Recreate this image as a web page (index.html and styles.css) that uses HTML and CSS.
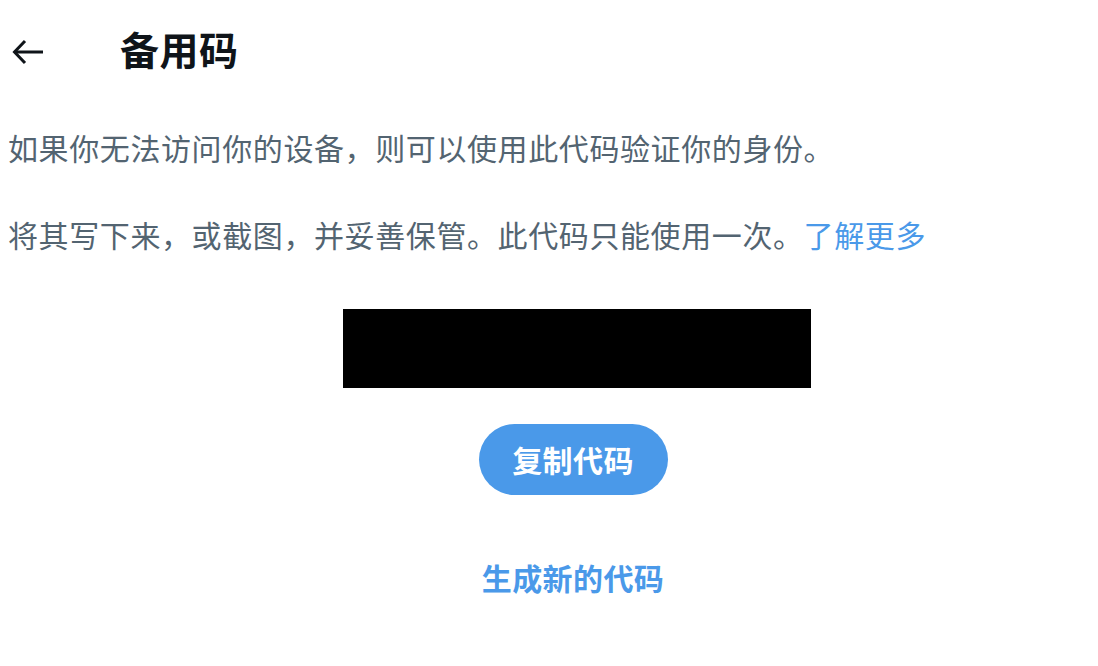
FILE: index.html
```html
<!DOCTYPE html>
<html lang="zh-CN">
<head>
<meta charset="utf-8">
<link rel="stylesheet" href="styles.css">
<title>备用码</title>
</head>
<body>
<div class="page">
  <header class="header">
    <button class="back" aria-label="返回">
      <svg width="32" height="26" viewBox="0 0 32 26" fill="none" stroke="#0f1419" stroke-width="3" stroke-linecap="butt" stroke-linejoin="miter">
        <path d="M31 13H3"/>
        <path d="M13 2L2.5 13L13 24"/>
      </svg>
    </button>
    <h1 class="title">备用码</h1>
  </header>
  <p class="text first">如果你无法访问你的设备，则可以使用此代码验证你的身份。</p>
  <p class="text second">将其写下来，或截图，并妥善保管。此代码只能使用一次。<a class="link" href="#">了解更多</a></p>
  <div class="center">
    <div class="code"></div>
    <button class="copy">复制代码</button>
    <a class="gen" href="#">生成新的代码</a>
  </div>
</div>
</body>
</html>
```

FILE: styles.css
```css
html, body {
  margin: 0;
  padding: 0;
  background: #fff;
}
body {
  font-family: "Noto Sans CJK SC", "Noto Sans", sans-serif;
  color: #0f1419;
}
.page {
  width: 1098px;
  height: 666px;
  overflow: hidden;
}
.header {
  display: flex;
  align-items: center;
  height: 96px;
}
.back {
  border: 0;
  background: none;
  padding: 0;
  margin-left: 12px;
  width: 32px;
  height: 26px;
  display: flex;
  margin-top: 8px;
}
.title {
  margin: 0 0 0 76px;
  font-size: 39px;
  font-weight: 700;
  line-height: 1;
  color: #0f1419;
  letter-spacing: 0.5px;
}
.text {
  margin: 0;
  padding-left: 8px;
  font-size: 30px;
  line-height: 44px;
  color: #536471;
  white-space: nowrap;
  letter-spacing: 0.6px;
}
.first {
  margin-top: 29px;
}
.second {
  margin-top: 43px;
}
.link {
  color: #4a99e9;
  text-decoration: none;
}
.center {
  display: flex;
  flex-direction: column;
  align-items: center;
  padding-left: 48px;
}
.code {
  width: 468px;
  height: 79px;
  background: #000;
  margin-top: 53px;
  margin-left: 8px;
}
.copy {
  margin-top: 36px;
  width: 189px;
  height: 71px;
  border: 0;
  border-radius: 36px;
  background: #4a99e9;
  color: #fff;
  font-family: "Noto Sans CJK SC", sans-serif;
  font-size: 30px;
  font-weight: 700;
  padding: 0;
  padding-bottom: 2px;
  letter-spacing: 0.4px;
}
.gen {
  margin-top: 60px;
  color: #4a99e9;
  font-size: 30px;
  font-weight: 700;
  text-decoration: none;
  line-height: 44px;
  letter-spacing: 0.4px;
}
```
